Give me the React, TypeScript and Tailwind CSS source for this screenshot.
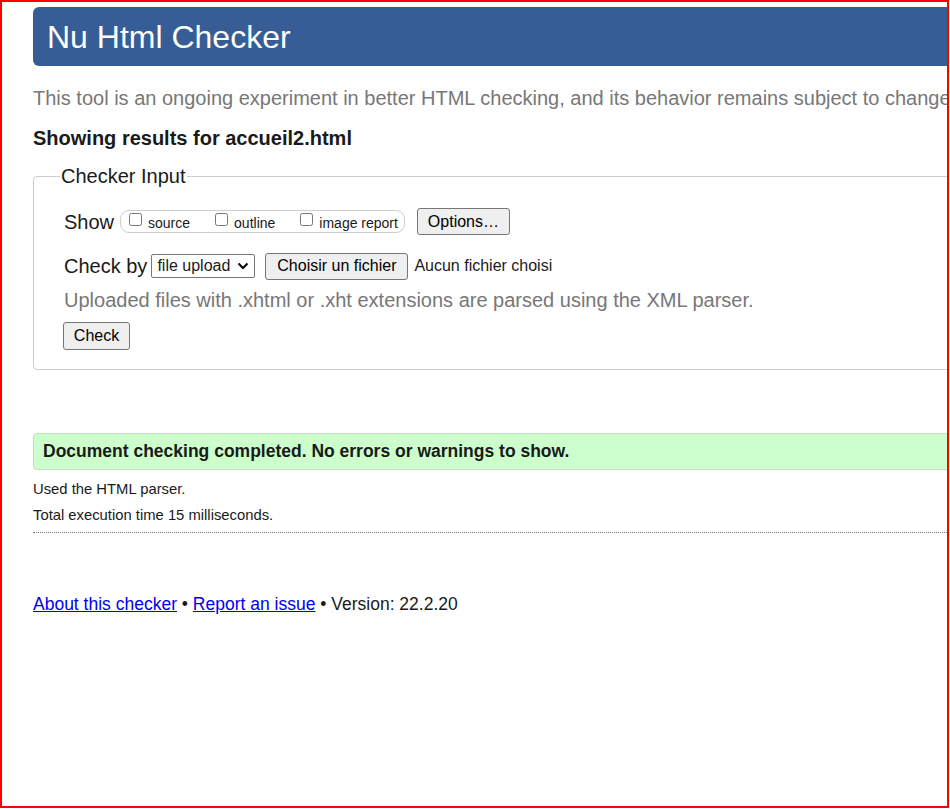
import React from 'react'

// Opciones de visualización del checker
const showOptions = [
  { id: 'source', label: 'source', gap: 'mr-[25px]' },
  { id: 'outline', label: 'outline', gap: 'mr-[25px]' },
  { id: 'image', label: 'image report', gap: 'mr-[6px]' },
]

const btn =
  'h-[27px] px-[10px] bg-[#efefef] border border-[#767676] rounded-[3px] text-[16px] leading-none text-black flex items-center'

export default function App() {
  return (
    <div className="w-[950px] h-[809px] bg-white" style={{ fontFamily: '"Liberation Sans", Arial, sans-serif' }}>
      <div className="w-[949px] h-[808px] border-2 border-[#ff0000] overflow-hidden">
        <div className="w-[1100px] pl-[31px] text-[#1a1a1a]">
          {/* Cabecera */}
          <div className="mt-[5px] h-[59px] rounded-l-[6px] bg-[#365d95] flex items-center pl-[14px]">
            <h1 className="text-[32px] leading-none text-white">Nu Html Checker</h1>
          </div>

          <p className="mt-[21px] text-[20px] leading-[23px] text-[#777] whitespace-nowrap">
            This tool is an ongoing experiment in better HTML checking, and its behavior remains subject to change
          </p>

          <p className="mt-[17px] text-[20px] leading-[22px] font-bold">Showing results for accueil2.html</p>

          <fieldset className="mt-[16px] w-[1000px] border border-[#cccccc] rounded-[4px] pl-[26px] pb-[19px]">
            <legend className="px-[1px] text-[20px] leading-[23px]">Checker Input</legend>

            <div className="ml-[4px]">
              <div className="mt-[20px] h-[27px] flex items-center">
                <span className="text-[20px] leading-none">Show</span>
                <div className="ml-[6px] h-[23px] border border-[#cccccc] rounded-[9px] flex items-center pl-[8px]">
                  {showOptions.map((o) => (
                    <label key={o.id} className={`flex items-center ${o.gap}`}>
                      <input type="checkbox" className="w-[13px] h-[13px] m-0 -mt-[4px]" />
                      <span className="ml-[6px] text-[14px] leading-none mt-[2px]">{o.label}</span>
                    </label>
                  ))}
                </div>
                <button className={`${btn} ml-[12px] w-[93px] justify-center`}>Options…</button>
              </div>

              <div className="mt-[18px] h-[26px] flex items-center">
                <span className="text-[20px] leading-none">Check by</span>
                <div className="ml-[4px] h-[24px] w-[104px] border border-[#767676] rounded-[2px] flex items-center pl-[5px] pr-[5px] justify-between">
                  <span className="text-[16px] leading-none">file upload</span>
                  <svg width="12" height="8" viewBox="0 0 12 8" fill="none">
                    <path d="M1.5 1.5 6 6l4.5-4.5" stroke="#000" strokeWidth="2" />
                  </svg>
                </div>
                <button className={`${btn} ml-[10px] h-[26px] w-[143px] justify-center`}>Choisir un fichier</button>
                <span className="ml-[6px] text-[16px] leading-none">Aucun fichier choisi</span>
              </div>

              <p className="mt-[10px] text-[20px] leading-[23px] text-[#777]">
                Uploaded files with .xhtml or .xht extensions are parsed using the XML parser.
              </p>

              <button className={`${btn} mt-[10px] -ml-[1px] h-[28px] w-[67px] justify-center`}>Check</button>
            </div>
          </fieldset>

          {/* Resultado */}
          <div className="mt-[63px] w-[1000px] h-[37px] bg-[#ccffcc] border border-[#c4dcc4] rounded-[4px] flex items-center pl-[9px]">
            <span className="text-[17.5px] leading-none font-bold">Document checking completed. No errors or warnings to show.</span>
          </div>

          <p className="mt-[11px] text-[14.8px] leading-[16px]">Used the HTML parser.</p>
          <p className="mt-[10px] text-[14.8px] leading-[16px]">Total execution time 15 milliseconds.</p>
          <div className="mt-[9px] w-[1000px] border-t border-dotted border-[#777]" />

          <p className="mt-[61px] text-[17.5px] leading-[21px]">
            <a href="#" className="text-[#0000ee] underline">About this checker</a>
            {' • '}
            <a href="#" className="text-[#0000ee] underline">Report an issue</a>
            {' • Version: 22.2.20'}
          </p>
        </div>
      </div>
    </div>
  )
}
